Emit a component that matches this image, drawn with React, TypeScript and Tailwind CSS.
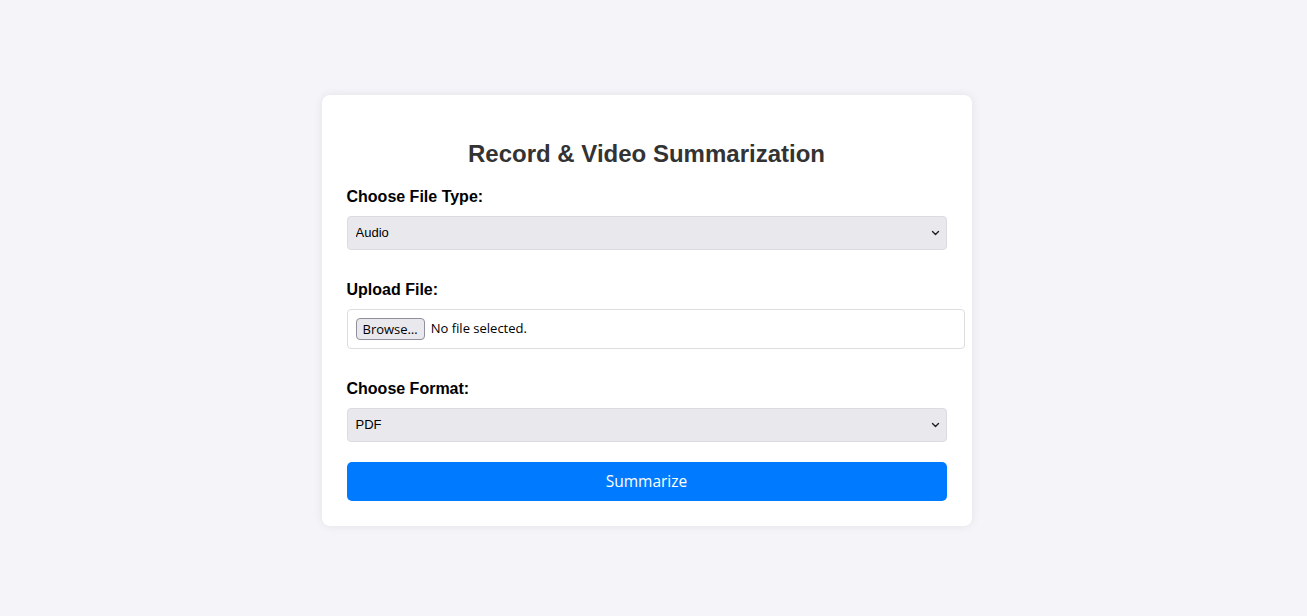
import { useState } from 'react';

function Chevron() {
  return (
    <svg
      className="pointer-events-none absolute right-[7px] top-1/2 -translate-y-1/2"
      width="9"
      height="6"
      viewBox="0 0 9 6"
      fill="none"
    >
      <path d="M1.5 1.5 L4.5 4.5 L7.5 1.5" stroke="#1f1f1f" strokeWidth="1.4" strokeLinecap="round" strokeLinejoin="round" />
    </svg>
  );
}

export default function App() {
  const [fileType, setFileType] = useState('audio');
  const [format, setFormat] = useState('pdf');

  return (
    <div className="min-h-screen w-full bg-[#f4f4f9] pr-[14px] pt-[95px] font-['Liberation_Sans',Arial,sans-serif]">
      <div className="mx-auto w-[650px] rounded-[8px] bg-white px-[25px] pb-[25px] pt-[45px] shadow-[0_0_10px_rgba(0,0,0,0.08)]">
        {/* 标题 */}
        <h2 className="mb-[20px] text-center text-[24px] font-bold leading-[28px] text-[#333]">
          Record &amp; Video Summarization
        </h2>

        {/* 文件类型 */}
        <label className="mb-[10px] block text-[16px] font-bold leading-[18px] text-black">Choose File Type:</label>
        <div className="relative">
          <select
            value={fileType}
            onChange={(e) => setFileType(e.target.value)}
            className="block h-[34px] w-full appearance-none rounded-[4px] border border-[#dcdce0] bg-[#e9e9ed] px-[8px] font-['Liberation_Sans',Arial,sans-serif] text-[13px] text-black outline-none"
          >
            <option value="audio">Audio</option>
            <option value="video">Video</option>
          </select>
          <Chevron />
        </div>

        {/* 上传 */}
        <label className="mb-[10px] mt-[31px] block text-[16px] font-bold leading-[18px] text-black">Upload File:</label>
        <div className="flex h-[40px] w-[618px] items-center gap-[6px] rounded-[4px] border border-[#dddddd] bg-white px-[8px] font-['Open_Sans','DejaVu_Sans',sans-serif] text-[13px] text-black">
          <span className="flex h-[22px] items-center rounded-[4px] border border-[#8f8f9d] bg-[#e9e9ed] px-[6px] leading-none">
            Browse…
          </span>
          <span>No file selected.</span>
        </div>

        {/* 格式 */}
        <label className="mb-[10px] mt-[31px] block text-[16px] font-bold leading-[18px] text-black">Choose Format:</label>
        <div className="relative">
          <select
            value={format}
            onChange={(e) => setFormat(e.target.value)}
            className="block h-[34px] w-full appearance-none rounded-[4px] border border-[#dcdce0] bg-[#e9e9ed] px-[8px] font-['Liberation_Sans',Arial,sans-serif] text-[13px] text-black outline-none"
          >
            <option value="pdf">PDF</option>
            <option value="docx">DOCX</option>
            <option value="txt">TXT</option>
          </select>
          <Chevron />
        </div>

        <button className="mt-[20px] block h-[39px] w-full rounded-[5px] bg-[#007bff] font-['Open_Sans','DejaVu_Sans',sans-serif] text-[15.5px] text-white">
          Summarize
        </button>
      </div>
    </div>
  );
}
